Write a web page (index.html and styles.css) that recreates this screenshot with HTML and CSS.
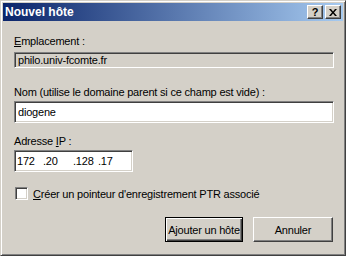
FILE: index.html
```html
<!DOCTYPE html>
<html lang="fr">
<head>
  <meta charset="UTF-8" />
  <title>Nouvel hôte</title>
  <link rel="stylesheet" href="styles.css">
</head>
<body>
  <div class="window">
    <div class="titlebar">
      <span class="title">Nouvel hôte</span>
      <div class="title-buttons">
        <div class="tbtn">?</div>
        <div class="tbtn">
          <svg width="8" height="7" viewBox="0 0 8 7">
            <path d="M0 0h2l2 2.5l2-2.5h2l-3 3.5l3 3.5h-2l-2-2.5l-2 2.5h-2l3-3.5z" fill="#000"/>
          </svg>
        </div>
      </div>
    </div>

    <div class="content">
      <div class="label label-first"><u>E</u>mplacement :</div>
      <div class="field readonly">philo.univ-fcomte.fr</div>

      <div class="label label-nom">Nom (utilise le domaine parent si ce champ est vide) :</div>
      <div class="field edit">diogene</div>

      <div class="label label-ip">Adresse <u>I</u>P :</div>
      <div class="field edit ip">
        <span class="oct">172</span>
        <span class="oct">.20</span>
        <span class="oct">.128</span>
        <span class="oct">.17</span>
      </div>

      <div class="check-row">
        <div class="checkbox"></div>
        <span><u>C</u>réer un pointeur d'enregistrement PTR associé</span>
      </div>

      <div class="actions">
        <div class="btn default">A<u>j</u>outer un hôte</div>
        <div class="btn">Annuler</div>
      </div>
    </div>
  </div>
</body>
</html>
```

FILE: styles.css
```css
body {
  margin: 0;
  background: #d4d0c8;
  font-family: "Liberation Sans", Arial, sans-serif;
  font-size: 11px;
  color: #000;
}

.window {
  width: 346px;
  height: 256px;
  box-sizing: border-box;
  padding: 2px;
  background: #d4d0c8;
  border: 1px solid;
  border-color: #d4d0c8 #404040 #404040 #d4d0c8;
  box-shadow: inset 1px 1px #fff, inset -1px -1px #808080;
}

.titlebar {
  height: 18px;
  display: flex;
  align-items: center;
  justify-content: space-between;
  background: linear-gradient(to right, #0a246a, #a6caf0);
  padding: 0 2px 0 2px;
}

.title {
  color: #fff;
  font-weight: bold;
  font-size: 12px;
}

.title-buttons {
  display: flex;
  gap: 2px;
}

.tbtn {
  width: 16px;
  height: 14px;
  box-sizing: border-box;
  display: flex;
  align-items: center;
  justify-content: center;
  background: #d4d0c8;
  border: 1px solid;
  border-color: #fff #404040 #404040 #fff;
  box-shadow: inset -1px -1px #808080;
  font-weight: bold;
  font-size: 11px;
  line-height: 1;
}

.content {
  padding: 0 9px 0 11px;
  letter-spacing: -0.2px;
}

.label {
  height: 13px;
  line-height: 13px;
  white-space: nowrap;
}

.label-first {
  margin-top: 14px;
}

.label-nom {
  margin-top: 18px;
}

.label-ip {
  margin-top: 12px;
}

.field {
  box-sizing: border-box;
  padding-left: 3px;
  border: 1px solid;
  border-color: #808080 #fff #fff #808080;
  box-shadow: inset 1px 1px #404040, inset -1px -1px #d4d0c8;
  display: flex;
  align-items: center;
}

.readonly {
  height: 16px;
  margin-top: 4px;
}

.edit {
  height: 22px;
  margin-top: 2px;
  background: #fff;
}

.ip {
  width: 119px;
  padding-left: 2px;
}

.oct:nth-child(1) { width: 26px; }
.oct:nth-child(2) { width: 30px; }
.oct:nth-child(3) { width: 25px; }
.oct:nth-child(4) { width: 24px; }

.check-row {
  display: flex;
  align-items: center;
  gap: 5px;
  margin-top: 15px;
  padding-left: 1px;
}

.checkbox {
  width: 13px;
  height: 13px;
  box-sizing: border-box;
  background: #fff;
  border: 1px solid;
  border-color: #808080 #fff #fff #808080;
  box-shadow: inset 1px 1px #404040, inset -1px -1px #d4d0c8;
}

.actions {
  display: flex;
  justify-content: flex-end;
  gap: 10px;
  margin-top: 17px;
  padding-right: 1px;
}

.btn {
  width: 80px;
  height: 25px;
  box-sizing: border-box;
  display: flex;
  align-items: center;
  justify-content: center;
  white-space: nowrap;
  border: 1px solid;
  border-color: #fff #404040 #404040 #fff;
  box-shadow: inset -1px -1px #808080;
}

.btn.default {
  width: 78px;
  border-color: #000;
  box-shadow: inset 1px 1px #fff, inset -1px -1px #404040, inset -2px -2px #808080;
}
```
